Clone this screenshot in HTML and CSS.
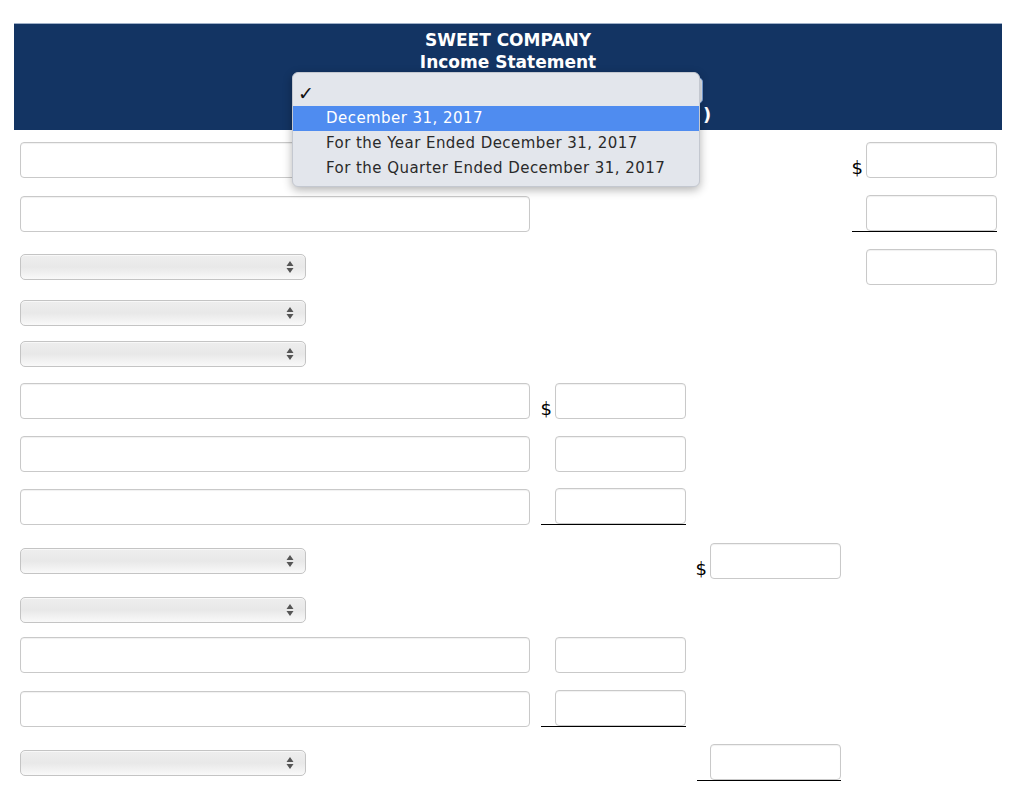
FILE: index.html
```html
<!DOCTYPE html>
<html>
<head>
<meta charset="utf-8">
<link rel="stylesheet" href="styles.css">
</head>
<body>
<div class="page">
  <div class="header">
    <div class="title">SWEET COMPANY</div>
    <div class="title">Income Statement</div>
    <div class="date-line">
      <div class="hdr-select"></div>
      <span class="paren">)</span>
    </div>
    <div class="popup">
      <div class="opt"><span class="check">✓</span></div>
      <div class="opt active">December 31, 2017</div>
      <div class="opt">For the Year Ended December 31, 2017</div>
      <div class="opt">For the Quarter Ended December 31, 2017</div>
    </div>
  </div>

  <div class="form">
    <div class="row r1">
      <input class="txt" type="text">
      <div class="cell"></div>
      <div class="cell"></div>
      <div class="cell"><span class="dollar">$</span><input class="num" type="text"></div>
    </div>
    <div class="row r2">
      <input class="txt" type="text">
      <div class="cell"></div>
      <div class="cell"></div>
      <div class="cell line"><input class="num" type="text"></div>
    </div>
    <div class="row r3">
      <div class="sel"><svg width="8" height="14" viewBox="0 0 8 14"><path d="M4 1 L7.5 6 L0.5 6 Z M0.5 8 L7.5 8 L4 13 Z" fill="#555"/></svg></div>
      <div class="cell"></div>
      <div class="cell"></div>
      <div class="cell"><input class="num" type="text"></div>
    </div>
    <div class="row r4">
      <div class="sel"><svg width="8" height="14" viewBox="0 0 8 14"><path d="M4 1 L7.5 6 L0.5 6 Z M0.5 8 L7.5 8 L4 13 Z" fill="#555"/></svg></div>
    </div>
    <div class="row r5">
      <div class="sel"><svg width="8" height="14" viewBox="0 0 8 14"><path d="M4 1 L7.5 6 L0.5 6 Z M0.5 8 L7.5 8 L4 13 Z" fill="#555"/></svg></div>
    </div>
    <div class="row r6">
      <input class="txt" type="text">
      <div class="cell"><span class="dollar">$</span><input class="num" type="text"></div>
    </div>
    <div class="row r7">
      <input class="txt" type="text">
      <div class="cell"><input class="num" type="text"></div>
    </div>
    <div class="row r8">
      <input class="txt" type="text">
      <div class="cell line"><input class="num" type="text"></div>
    </div>
    <div class="row r9">
      <div class="sel"><svg width="8" height="14" viewBox="0 0 8 14"><path d="M4 1 L7.5 6 L0.5 6 Z M0.5 8 L7.5 8 L4 13 Z" fill="#555"/></svg></div>
      <div class="cell"></div>
      <div class="cell"><span class="dollar">$</span><input class="num" type="text"></div>
    </div>
    <div class="row r10">
      <div class="sel"><svg width="8" height="14" viewBox="0 0 8 14"><path d="M4 1 L7.5 6 L0.5 6 Z M0.5 8 L7.5 8 L4 13 Z" fill="#555"/></svg></div>
    </div>
    <div class="row r11">
      <input class="txt" type="text">
      <div class="cell"><input class="num" type="text"></div>
    </div>
    <div class="row r12">
      <input class="txt" type="text">
      <div class="cell line"><input class="num" type="text"></div>
    </div>
    <div class="row r13">
      <div class="sel"><svg width="8" height="14" viewBox="0 0 8 14"><path d="M4 1 L7.5 6 L0.5 6 Z M0.5 8 L7.5 8 L4 13 Z" fill="#555"/></svg></div>
      <div class="cell"></div>
      <div class="cell line"><input class="num" type="text"></div>
    </div>
  </div>
</div>
</body>
</html>
```

FILE: styles.css
```css
html, body {
  margin: 0;
  padding: 0;
  background: #fff;
  font-family: "DejaVu Sans", Verdana, sans-serif;
}
.page {
  padding-top: 23px;
  width: 1024px;
}
.header {
  position: relative;
  margin-left: 14px;
  width: 988px;
  height: 107px;
  box-sizing: border-box;
  background: #133463;
  border-top: 1px solid #9fb0c8;
  padding-top: 5px;
  color: #fff;
}
.title {
  text-align: center;
  font-weight: bold;
  font-size: 17px;
  line-height: 22px;
  letter-spacing: 0;
}
.date-line {
  display: flex;
  align-items: flex-start;
  margin-top: 4px;
  padding-left: 279px;
  height: 50px;
}
.hdr-select {
  width: 408px;
  height: 25px;
  border: 1px solid #7aa3dc;
  border-radius: 5px;
  background: #e4e8ee;
}
.paren {
  align-self: flex-end;
  font-size: 18px;
  font-weight: bold;
  line-height: 24px;
}
.popup {
  position: absolute;
  left: 278px;
  top: 48px;
  width: 408px;
  box-sizing: border-box;
  padding: 8px 0 5px;
  background: #e3e6ec;
  border: 1px solid #c4c8d0;
  border-radius: 6px;
  box-shadow: 0 3px 10px rgba(0,0,0,0.3);
  color: #2a2a2a;
  font-size: 15px;
  letter-spacing: 0.45px;
}
.opt {
  height: 25px;
  line-height: 25px;
  padding-left: 33px;
  white-space: nowrap;
}
.opt.active {
  background: #4f8cf0;
  color: #fff;
}
.check {
  display: inline-block;
  margin-left: -28px;
  font-size: 19px;
  font-weight: bold;
  color: #111;
}
.form {
  display: flex;
  flex-direction: column;
  padding-left: 20px;
}
.row {
  display: grid;
  grid-template-columns: 510px 145px 144px 145px;
  column-gap: 11px;
  align-items: center;
}
.r1 { margin-top: 12px; }
.r2 { margin-top: 17px; }
.r3 { margin-top: 17px; }
.r4 { margin-top: 15px; }
.r5 { margin-top: 15px; }
.r6 { margin-top: 16px; }
.r7 { margin-top: 17px; }
.r8 { margin-top: 16px; }
.r9 { margin-top: 18px; }
.r10 { margin-top: 18px; }
.r11 { margin-top: 14px; }
.r12 { margin-top: 17px; }
.r13 { margin-top: 17px; }
.txt {
  width: 510px;
  height: 36px;
  box-sizing: border-box;
  border: 1px solid #c9c9c9;
  border-radius: 4px;
  box-shadow: inset 0 1px 1px rgba(0,0,0,0.06);
  margin: 0;
  padding: 0;
  background: #fff;
}
.sel {
  width: 286px;
  height: 26px;
  box-sizing: border-box;
  border: 1px solid #c4c4c4;
  border-radius: 5px;
  background: linear-gradient(to bottom, #eeeeee 0%, #e8e8e8 50%, #f9f9f9 100%);
  box-shadow: inset 0 1px 0 rgba(255,255,255,0.6);
  display: flex;
  align-items: center;
  justify-content: flex-end;
  padding-right: 11px;
}
.cell {
  display: flex;
  justify-content: flex-end;
  align-items: flex-end;
  height: 36px;
}
.cell.line {
  border-bottom: 1px solid #000;
  height: 37px;
  box-sizing: border-box;
}
.dollar {
  font-size: 18px;
  line-height: 20px;
  color: #000;
  margin-right: 3px;
}
.num {
  width: 131px;
  height: 36px;
  box-sizing: border-box;
  border: 1px solid #c9c9c9;
  border-radius: 4px;
  box-shadow: inset 0 1px 1px rgba(0,0,0,0.06);
  margin: 0;
  padding: 0;
  background: #fff;
}
```
